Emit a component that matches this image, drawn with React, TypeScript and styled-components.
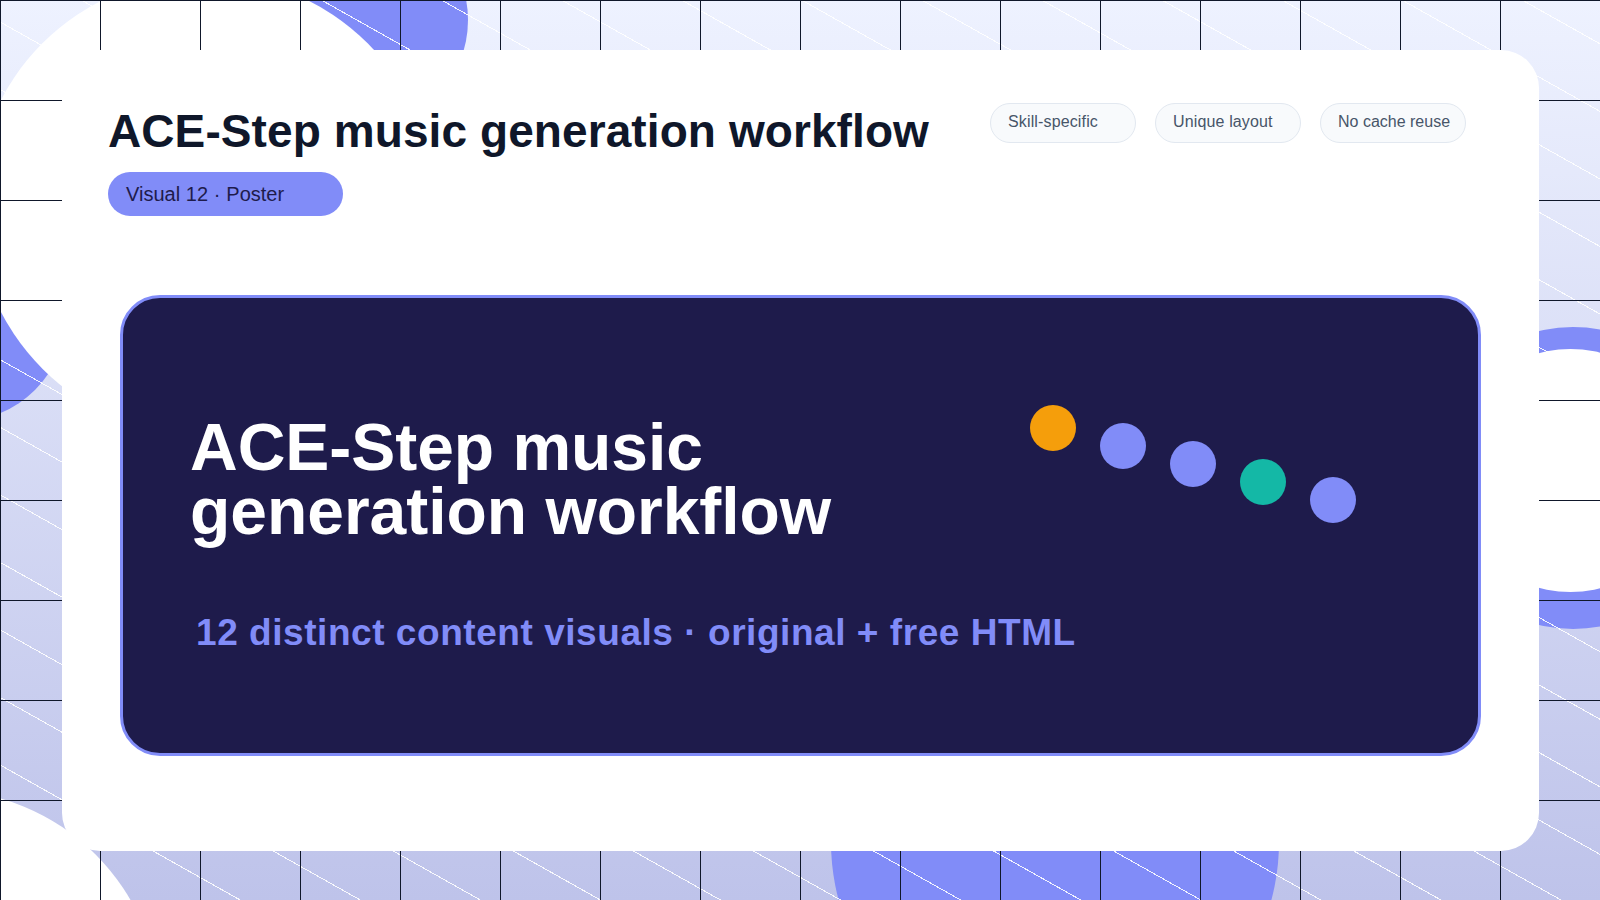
import React from "react";
import styled, { createGlobalStyle } from "styled-components";

const Global = createGlobalStyle`
  html, body { margin: 0; padding: 0; width: 1600px; height: 900px; overflow: hidden; }
  body { font-family: "Liberation Sans", Arial, sans-serif; }
  #root { width: 1600px; height: 900px; }
`;

const Stage = styled.div`
  position: relative;
  width: 1600px;
  height: 900px;
  overflow: hidden;
  background: linear-gradient(180deg, #eef2ff 0%, #bec3ea 100%);
  display: flex;
  align-items: flex-start;
`;

const Blob = styled.div<{ $x: number; $y: number; $d: number; $c: string }>`
  position: absolute;
  left: ${(p) => p.$x - p.$d / 2}px;
  top: ${(p) => p.$y - p.$d / 2}px;
  width: ${(p) => p.$d}px;
  height: ${(p) => p.$d}px;
  border-radius: 50%;
  background: ${(p) => p.$c};
`;

const Hatch = styled.div`
  position: absolute;
  inset: 0;
  background: repeating-linear-gradient(
    to top right,
    rgba(255, 255, 255, 0.9) 0 0.5px,
    transparent 0.5px 58.37px,
    rgba(255, 255, 255, 0.9) 58.37px 58.87px
  );
`;

const Grid = styled.div`
  position: absolute;
  inset: 0;
  background-image:
    linear-gradient(#0f172a 1px, transparent 1px),
    linear-gradient(90deg, #0f172a 1px, transparent 1px);
  background-size: 100px 100px;
`;

const Card = styled.main`
  position: relative;
  margin: 50px 0 0 62px;
  width: 1477px;
  height: 801px;
  box-sizing: border-box;
  background: #ffffff;
  border-radius: 38px;
  padding: 54px 73px 0 46px;
`;

const Header = styled.header`
  display: flex;
  justify-content: space-between;
  align-items: flex-start;
`;

const TitleBlock = styled.div`
  display: flex;
  flex-direction: column;
  align-items: flex-start;
`;

const Title = styled.h1`
  margin: 0;
  font-size: 46px;
  line-height: 54px;
  font-weight: 700;
  letter-spacing: 0.09px;
  color: #0f172a;
`;

const Tag = styled.div`
  margin-top: 14px;
  box-sizing: border-box;
  width: 235px;
  height: 44px;
  padding: 0 18px;
  border-radius: 22px;
  background: #818cf8;
  color: #1e1b4b;
  font-size: 20px;
  line-height: 44px;
  word-spacing: 0.2px;
`;

const Chips = styled.div`
  display: flex;
  gap: 19px;
  margin-top: -1px;
`;

const Chip = styled.div<{ $track?: number }>`
  box-sizing: border-box;
  width: 146px;
  height: 40px;
  padding: 0 17px;
  border: 1px solid #e2e8f0;
  border-radius: 20px;
  background: #f8fafc;
  color: #475569;
  font-size: 16px;
  line-height: 36px;
  letter-spacing: ${(p) => p.$track ?? 0}px;
  white-space: nowrap;
`;

const Poster = styled.section`
  margin: 79px 0 0 12px;
  width: 1361px;
  height: 461px;
  box-sizing: border-box;
  border: 3px solid #818cf8;
  border-radius: 40px;
  background: #1e1b4b;
  padding: 117px 0 0 67px;
`;

const PosterTop = styled.div`
  display: flex;
  justify-content: space-between;
  align-items: flex-start;
`;

const PosterTitle = styled.h2`
  margin: 0;
  font-size: 66px;
  line-height: 64px;
  font-weight: 700;
  letter-spacing: -0.03px;
  color: #ffffff;
`;

const Dots = styled.div`
  display: flex;
  gap: 24px;
  align-items: flex-start;
  margin: -10px 122px 0 0;
`;

const Dot = styled.span<{ $c: string; $i: number }>`
  width: 46px;
  height: 46px;
  border-radius: 50%;
  background: ${(p) => p.$c};
  margin-top: ${(p) => p.$i * 18}px;
`;

const Sub = styled.p`
  margin: 67px 0 0 6px;
  font-size: 37px;
  line-height: 45px;
  font-weight: 700;
  letter-spacing: 0.55px;
  color: #818cf8;
`;

const dots = ["#f59e0b", "#818cf8", "#818cf8", "#14b8a6", "#818cf8"];

export default function App() {
  return (
    <Stage>
      <Global />
      <Blob $x={358} $y={20} $d={220} $c="#818cf8" />
      <Blob $x={-40} $y={315} $d={212} $c="#818cf8" />
      <Blob $x={1055} $y={842} $d={448} $c="#818cf8" />
      <Blob $x={1573} $y={478} $d={302} $c="#818cf8" />
      <Blob $x={205} $y={206} $d={460} $c="#ffffff" />
      <Blob $x={1570} $y={470.5} $d={243} $c="#ffffff" />
      <Blob $x={-60} $y={1010} $d={440} $c="#ffffff" />
      <Hatch />
      <Grid />
      <Card>
        <Header>
          <TitleBlock>
            <Title>ACE-Step music generation workflow</Title>
            <Tag>Visual 12 · Poster</Tag>
          </TitleBlock>
          <Chips>
            <Chip $track={0.14}>Skill-specific</Chip>
            <Chip $track={0.14}>Unique layout</Chip>
            <Chip>No cache reuse</Chip>
          </Chips>
        </Header>
        <Poster>
          <PosterTop>
            <PosterTitle>
              ACE-Step music
              <br />
              generation workflow
            </PosterTitle>
            <Dots>
              {dots.map((c, i) => (
                <Dot key={i} $c={c} $i={i} />
              ))}
            </Dots>
          </PosterTop>
          <Sub>12 distinct content visuals · original + free HTML</Sub>
        </Poster>
      </Card>
    </Stage>
  );
}
